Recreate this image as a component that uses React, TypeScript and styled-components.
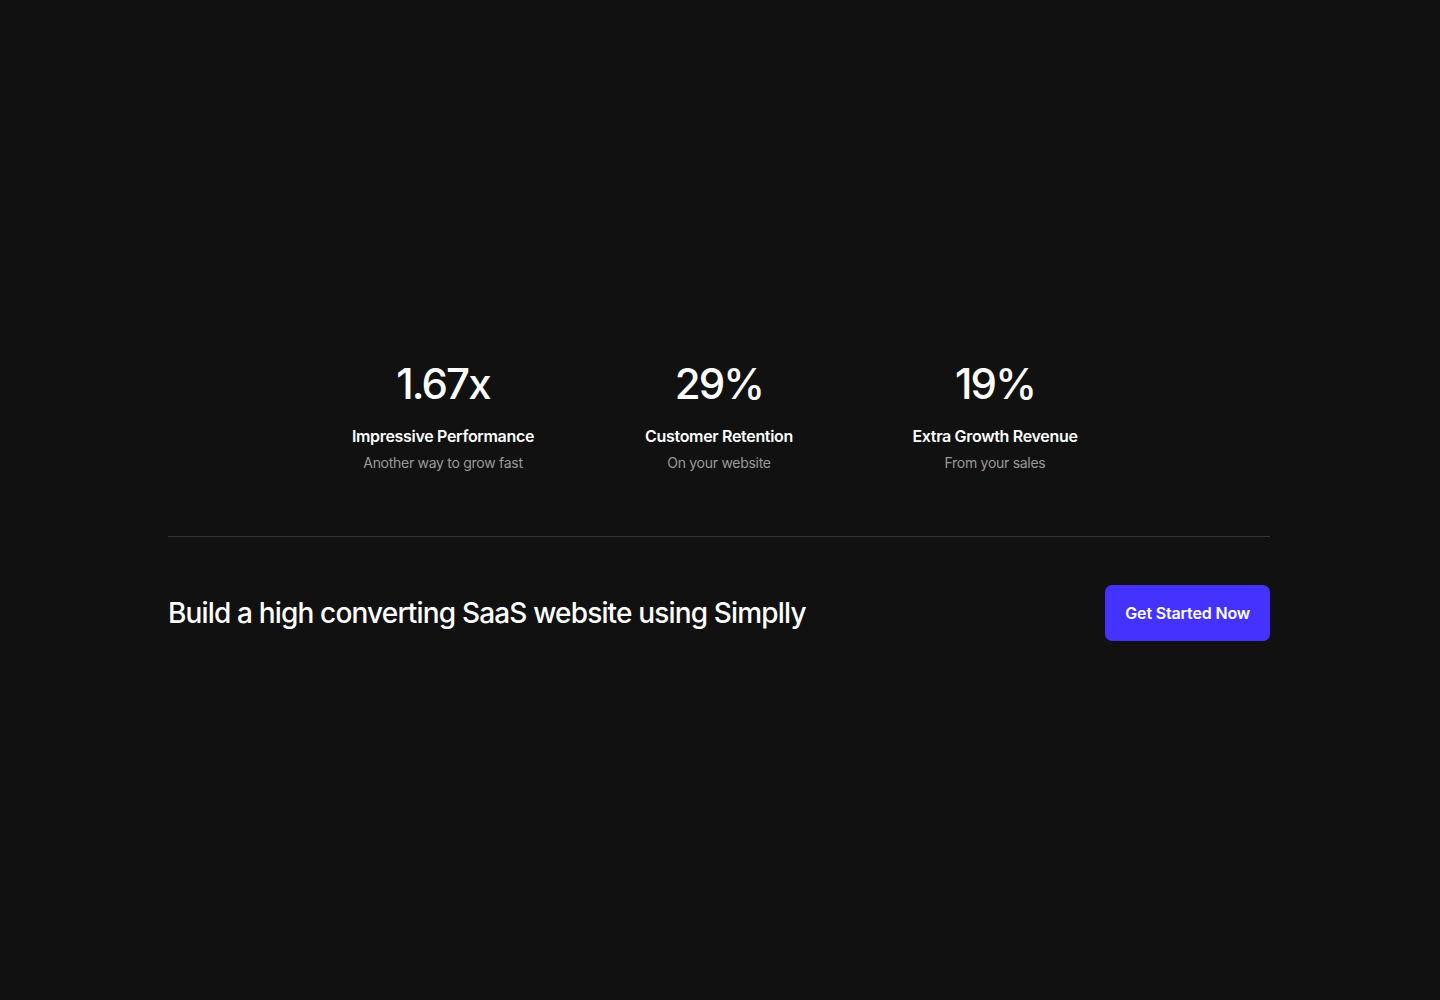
import React from 'react'
import styled, { createGlobalStyle } from 'styled-components'

//-----------------------------------------------------------------------------
// Data
//-----------------------------------------------------------------------------
const stats = [
  { value: '1.67x', title: 'Impressive Performance', text: 'Another way to grow fast' },
  { value: '29%', title: 'Customer Retention', text: 'On your website' },
  { value: '19%', title: 'Extra Growth Revenue', text: 'From your sales' }
]

//-----------------------------------------------------------------------------
// Component
//-----------------------------------------------------------------------------
const App = () => {
  return (
    <>
      <GlobalStyle />
      <Page>
        <Container>
          <Stats>
            {stats.map(stat => (
              <Stat key={stat.value}>
                <StatValue>{stat.value}</StatValue>
                <StatTitle>{stat.title}</StatTitle>
                <StatText>{stat.text}</StatText>
              </Stat>
            ))}
          </Stats>
          <Divider />
          <Cta>
            <CtaHeading>Build a high converting SaaS website using Simplly</CtaHeading>
            <CtaButton>Get Started Now</CtaButton>
          </Cta>
        </Container>
      </Page>
    </>
  )
}

//-----------------------------------------------------------------------------
// Styled Components
//-----------------------------------------------------------------------------
const GlobalStyle = createGlobalStyle`
  * {
    box-sizing: border-box;
  }
  body {
    margin: 0;
    background-color: #111111;
    font-family: Inter, "Noto Sans", sans-serif;
    color: white;
  }
`

const Page = styled.div`
  min-height: 1000px;
  padding-top: 358px;
`

const Container = styled.div`
  width: 1102px;
  margin: 0 auto;
  transform: translateX(-1px);
`

const Stats = styled.div`
  width: 828px;
  margin: 0 auto;
  display: grid;
  grid-template-columns: repeat(3, 1fr);
`

const Stat = styled.div`
  display: flex;
  flex-direction: column;
  align-items: center;
  text-align: center;
`

const StatValue = styled.div`
  font-size: 42px;
  font-weight: 500;
  line-height: 52px;
  letter-spacing: -0.045em;
`

const StatTitle = styled.div`
  margin-top: 14px;
  font-size: 16px;
  font-weight: 600;
  line-height: 24px;
  letter-spacing: -0.02em;
`

const StatText = styled.div`
  margin-top: 5px;
  font-size: 14px;
  line-height: 20px;
  letter-spacing: -0.02em;
  color: #9a9a9a;
`

const Divider = styled.div`
  margin-top: 63px;
  height: 1px;
  background-color: #333333;
`

const Cta = styled.div`
  margin-top: 48px;
  display: flex;
  justify-content: space-between;
  align-items: center;
`

const CtaHeading = styled.h2`
  margin: 0;
  font-size: 28px;
  font-weight: 500;
  line-height: 36px;
  letter-spacing: -0.03em;
`

const CtaButton = styled.button`
  height: 56px;
  padding: 0 20px;
  border: none;
  border-radius: 7px;
  background-color: #4433ff;
  color: white;
  font-family: Inter, sans-serif;
  font-size: 16px;
  font-weight: 600;
  letter-spacing: -0.01em;
  cursor: pointer;
`

export default App
